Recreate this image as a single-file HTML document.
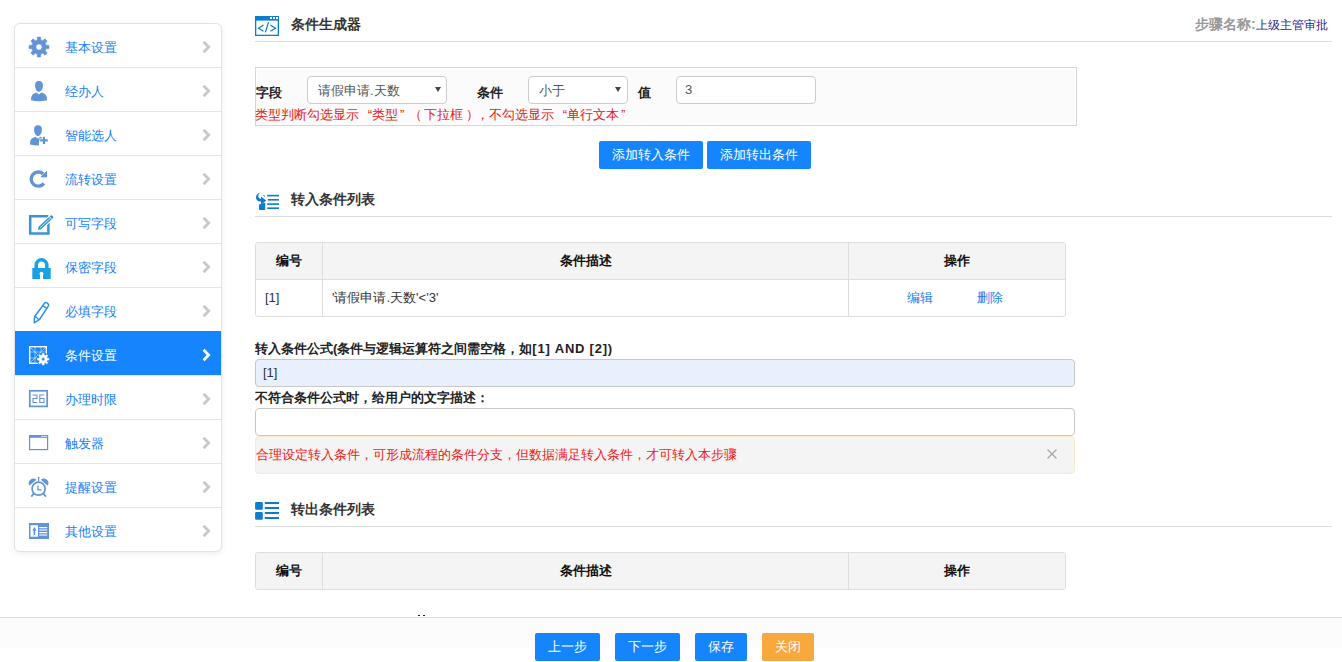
<!DOCTYPE html>
<html><head><meta charset="utf-8">
<style>
*{box-sizing:border-box;margin:0;padding:0}
html,body{width:1342px;height:662px;overflow:hidden;background:#fff;font-family:"Liberation Sans",sans-serif;color:#333}
.abs{position:absolute}
.side{position:absolute;left:14px;top:23px;width:208px;height:529px;border:1px solid #e3e3e3;border-radius:6px;background:#fff;box-shadow:0 2px 6px rgba(0,0,0,.07);overflow:hidden}
.item{position:absolute;left:0;width:206px;height:44px;border-top:1px solid #e6e6e6}
.item .t{position:absolute;left:50px;top:2px;line-height:44px;font-size:13px;color:#157ffb;white-space:nowrap}
.item .ch{position:absolute;left:188px;top:17px}
.item svg.ic{position:absolute}
.item.act{background:#1684fc;border-top-color:#1684fc}
.item.act .t{color:#fff;left:51px;top:2px}
.hdr{position:absolute;left:255px;width:1077px;border-bottom:1px solid #dcdcdc}
.htitle{position:absolute;left:291px;font-size:14px;font-weight:bold;color:#333;white-space:nowrap}
.btn{position:absolute;height:28px;line-height:28px;background:#1585fd;color:#fff;font-size:13px;text-align:center;border-radius:2px;white-space:nowrap}
.tbl{position:absolute;left:255px;width:811px;border:1px solid #dedede;border-radius:3px;overflow:hidden}
.tbl .row{position:absolute;left:0;width:809px}
.tbl .hd{background:#f4f4f4;font-weight:bold;color:#111;font-size:13px}
.cell{position:absolute;top:0;height:100%;white-space:nowrap}
.arr{position:absolute;top:10px;width:0;height:0;border-left:3.2px solid transparent;border-right:3.2px solid transparent;border-top:5.5px solid #444}
.q1,.q2,.p1,.p2{display:inline-block;width:13px;white-space:nowrap}.q1{text-align:right}.q2{text-align:left;text-indent:2px}.p1{text-indent:-2px}.p2{text-indent:3px}
.lbl{position:absolute;left:255px;font-size:13px;font-weight:bold;color:#222;white-space:nowrap}
</style></head><body>

<!-- SIDEBAR -->
<div class="side">
  <div class="item" style="top:0;border-top:none;height:43px">
    <span class="t">基本设置</span>
  </div>
  <div class="item" style="top:43px"><span class="t">经办人</span></div>
  <div class="item" style="top:87px"><span class="t">智能选人</span></div>
  <div class="item" style="top:131px"><span class="t">流转设置</span></div>
  <div class="item" style="top:175px"><span class="t">可写字段</span></div>
  <div class="item" style="top:219px"><span class="t">保密字段</span></div>
  <div class="item" style="top:263px"><span class="t">必填字段</span></div>
  <div class="item act" style="top:307px;height:45px;left:-1px;width:208px"><span class="t">条件设置</span></div>
  <div class="item" style="top:351px"><span class="t">办理时限</span></div>
  <div class="item" style="top:395px"><span class="t">触发器</span></div>
  <div class="item" style="top:439px"><span class="t">提醒设置</span></div>
  <div class="item" style="top:483px"><span class="t">其他设置</span></div>
</div>


<!-- SIDEBAR ICONS -->
<svg class="abs" style="left:0;top:0" width="60" height="662" viewBox="0 0 60 662">
 <!-- gear -->
 <path fill="#6194d6" fill-rule="evenodd" stroke="#6194d6" stroke-width="0.6" stroke-linejoin="round" d="M37.23 39.92 L37.42 37.02 L40.58 37.02 L40.77 39.92 L42.76 40.74 L44.94 38.83 L47.17 41.06 L45.26 43.24 L46.08 45.23 L48.98 45.42 L48.98 48.58 L46.08 48.77 L45.26 50.76 L47.17 52.94 L44.94 55.17 L42.76 53.26 L40.77 54.08 L40.58 56.98 L37.42 56.98 L37.23 54.08 L35.24 53.26 L33.06 55.17 L30.83 52.94 L32.74 50.76 L31.92 48.77 L29.02 48.58 L29.02 45.42 L31.92 45.23 L32.74 43.24 L30.83 41.06 L33.06 38.83 L35.24 40.74 Z M35.90 47.00 a3.10 3.10 0 1 0 6.20 0 a3.10 3.10 0 1 0 -6.20 0 Z"/>
 <!-- person -->
 <g fill="#6194d6">
  <path d="M39 81 C42.3 81 43.1 83.6 42.9 86 C42.7 89 41 91.8 39 91.8 C37 91.8 35.3 89 35.1 86 C34.9 83.6 35.7 81 39 81 Z"/>
  <path d="M31 100.3 Q30.9 95.2 33.6 93.8 L36.6 92.6 L39 94.6 L41.4 92.6 L44.4 93.8 Q47.1 95.2 47 100.3 Q39 102.2 31 100.3 Z"/>
 </g>
 <!-- person plus -->
 <g fill="#6194d6">
  <path d="M38 125.2 C41.3 125.2 42.1 127.8 41.9 130.2 C41.7 133.2 40 136 38 136 C36 136 34.3 133.2 34.1 130.2 C33.9 127.8 34.7 125.2 38 125.2 Z"/>
  <path d="M30 144.5 Q29.9 139.4 32.6 138 L35.6 136.8 L38 138.8 L40.4 136.8 L43.4 138 Q45.5 139 45.9 141 L39 141 L39 145.5 Q34 145.6 30 144.5 Z"/>
  <path d="M42.9 136.7 h2.2 v2.5 h2.7 v2.2 h-2.7 v2.6 h-2.2 v-2.6 h-2.8 v-2.2 h2.8 Z" stroke="#fff" stroke-width="1.4" paint-order="stroke"/>
 </g>
 <!-- refresh -->
 <g>
  <path d="M43.9 183.4 A7.1 7.1 0 1 1 43.2 173.9" fill="none" stroke="#6194d6" stroke-width="3.4"/>
  <path d="M47 170.4 L47 177.2 L40.4 177.2 Z" fill="#6194d6"/>
 </g>
 <!-- edit -->
 <g>
  <path d="M48.3 216.2 H30.2 V233.5 H48.4 V222.3" fill="none" stroke="#3a95cf" stroke-width="2.5"/>
  <g transform="translate(37 230.6) rotate(-43)">
   <path d="M0 0 L3.6 -2.3 H20 Q22 -2.3 22 0 Q22 2.3 20 2.3 H3.6 Z" fill="#3a95cf" stroke="#fff" stroke-width="1.1"/>
   <path d="M4.2 0 H18.6" stroke="#fff" stroke-width="0.7"/>
   <path d="M18.6 -2.3 V2.3" stroke="#fff" stroke-width="0.8"/>
  </g>
 </g>
 <!-- lock -->
 <g fill="#1aa0e4">
  <path d="M36.2 268.5 V265.4 A5.3 5.6 0 0 1 46.8 265.4 V268.5" fill="none" stroke="#1aa0e4" stroke-width="3.6"/>
  <path d="M32.3 268 H50.7 V279 H43 V275.2 A2 2 0 1 0 40 275.2 V279 H32.3 Z" fill-rule="evenodd"/>
 </g>
 <!-- pencil outline -->
 <g fill="none" stroke="#2f8de4" stroke-width="1.45" stroke-linejoin="round">
  <path d="M44.3 303.5 Q45.5 301.9 47.3 303.1 Q49.3 304.5 48.3 306.2 L39.5 319.5 L34.3 322.8 L34.5 316.8 Z"/>
  <path d="M42.8 305.6 L46.8 308.3"/>
  <path d="M34.5 316.8 Q36.5 317 37 318 Q37.5 319.3 39.5 319.5"/>
 </g>
 <!-- condition (white) -->
 <g stroke="#fff" fill="none">
  <rect x="29.7" y="346.7" width="16.6" height="16.6" stroke-width="1.4"/>
  <path d="M30 347 L46 363 M46 347 L30 363 M35 347 V363 M41 347 V363 M30 352 H46 M30 358 H46" stroke-width="0.6" opacity="0.8"/>
 </g>
 <circle cx="43.2" cy="359.2" r="6.8" fill="#1684fc"/>
 <path fill="#fff" fill-rule="evenodd" stroke="#fff" stroke-width="0.4" stroke-linejoin="round" d="M42.18 355.12 L42.28 353.37 L44.12 353.37 L44.22 355.12 L45.36 355.60 L46.67 354.43 L47.97 355.73 L46.80 357.04 L47.28 358.18 L49.03 358.28 L49.03 360.12 L47.28 360.22 L46.80 361.36 L47.97 362.67 L46.67 363.97 L45.36 362.80 L44.22 363.28 L44.12 365.03 L42.28 365.03 L42.18 363.28 L41.04 362.80 L39.73 363.97 L38.43 362.67 L39.60 361.36 L39.12 360.22 L37.37 360.12 L37.37 358.28 L39.12 358.18 L39.60 357.04 L38.43 355.73 L39.73 354.43 L41.04 355.60 Z M41.60 359.20 a1.60 1.60 0 1 0 3.20 0 a1.60 1.60 0 1 0 -3.20 0 Z"/>
 <!-- calendar 26 -->
 <g fill="none" stroke="#6194d6">
  <rect x="29.8" y="390.8" width="17.4" height="15.6" stroke-width="1.7"/>
  <path d="M32.5 395 H37 V398.5 H33 V402.5 H37.2" stroke-width="1.1"/>
  <path d="M44 395 H39.8 V402.5 H44 V398.5 H40" stroke-width="1.1"/>
 </g>
 <!-- window -->
 <g>
  <rect x="29.6" y="435.6" width="18" height="14" fill="none" stroke="#6194d6" stroke-width="1.2"/>
  <rect x="29" y="435" width="19" height="2.8" fill="#6194d6"/>
  <rect x="41.5" y="435.8" width="1.2" height="1.2" fill="#fff"/>
  <rect x="43.5" y="435.8" width="1.2" height="1.2" fill="#fff"/>
  <rect x="45.5" y="435.8" width="1.2" height="1.2" fill="#fff"/>
 </g>
 <!-- alarm -->
 <g fill="#6194d6" stroke="#6194d6">
  <circle cx="38.6" cy="488.7" r="6.5" fill="none" stroke-width="1.7"/>
  <path d="M29.6 485.6 A4.5 4.5 0 0 1 36.4 479.8 Z" stroke="none"/>
  <path d="M47.6 485.6 A4.5 4.5 0 0 0 40.8 479.8 Z" stroke="none"/>
  <path d="M38.6 477.2 V481.5" stroke-width="1.2"/><circle cx="38.6" cy="477.6" r="0.9" stroke="none"/>
  <path d="M34 493.4 L31.3 496.6 M43.2 493.4 L45.9 496.6" stroke-width="1.7"/>
  <path d="M38 485.5 V489.8 H41.5" fill="none" stroke-width="1.3"/>
 </g>
 <!-- info list -->
 <g>
  <rect x="29" y="523" width="20" height="16" fill="#6194d6"/>
  <rect x="30.5" y="525.2" width="7.5" height="11.5" fill="#fff"/>
  <path d="M34.4 527 L36.6 530.5 H35.2 V535 H33.6 V530.5 H32.2 Z" fill="#6194d6"/>
  <rect x="39.2" y="527" width="8" height="1.2" fill="#fff"/>
  <rect x="39.2" y="529.2" width="8" height="1.6" fill="#c9dbf2"/>
  <rect x="39.2" y="532" width="8" height="1.2" fill="#fff"/>
  <rect x="39.2" y="534.2" width="8" height="1.6" fill="#c9dbf2"/>
 </g>
</svg>

<!-- MAIN ICONS -->
<svg class="abs" style="left:250px;top:0" width="40" height="530" viewBox="250 0 40 530">
 <!-- code window -->
 <g>
  <rect x="255.65" y="16.65" width="22.7" height="18.7" fill="none" stroke="#0a7dcc" stroke-width="1.3"/>
  <rect x="255" y="16" width="24" height="4.6" fill="#0a7dcc"/>
  <rect x="270" y="17" width="2" height="2" fill="#fff"/>
  <rect x="273" y="17" width="2" height="2" fill="#fff"/>
  <rect x="276" y="17" width="2" height="2" fill="#fff"/>
  <path d="M263.5 25 L258.5 28.2 L263.5 31.3 M268.5 22.3 L265.4 32.4 M270.3 25 L275.5 28.2 L270.3 31.3" fill="none" stroke="#0a7dcc" stroke-width="1.2"/>
 </g>
 <!-- transfer in list -->
 <g fill="#0a7dcc">
  <rect x="267.2" y="194.8" width="11.8" height="1.6"/>
  <rect x="267.8" y="199" width="11.2" height="1.6"/>
  <rect x="267.2" y="203.3" width="11.8" height="1.6"/>
  <rect x="267.2" y="207.4" width="11.8" height="1.6"/>
  <path d="M259.8 192.6 C255 194.8 255 199.8 258.6 201.2 L261 201.6 V204.8 L266.2 200.6 L261 196.6 V198.9 L259.8 198.6 C257.8 197.9 257.9 195 259.8 192.6 Z"/>
  <path d="M262.6 194.9 L264.9 195.6 L264.6 197 Z"/>
  <path d="M259 204.6 L265.2 202.4 V209 Q265.2 209.9 264.3 209.9 H259.9 Q259 209.9 259 209 Z"/>
 </g>
 <!-- list -->
 <g fill="#0a7dcc">
  <rect x="255.1" y="501.9" width="7.7" height="7.9" rx="1.4"/>
  <rect x="255.1" y="511.9" width="7.7" height="7.9" rx="1.4"/>
  <rect x="264.8" y="502" width="14.2" height="2"/>
  <rect x="264.8" y="507" width="14.2" height="2"/>
  <rect x="264.8" y="512" width="14.2" height="2"/>
  <rect x="264.8" y="517" width="14.2" height="2"/>
 </g>
</svg>

<!-- chevrons -->
<svg class="abs" style="left:195px;top:0" width="20" height="662" viewBox="195 0 20 662">
 <g fill="none" stroke="#c8c8c8" stroke-width="2.8" stroke-linecap="butt" stroke-linejoin="miter">
  <path d="M203.6 41.8 L208.6 47.0 L203.6 52.2"/>
  <path d="M203.6 85.8 L208.6 91.0 L203.6 96.2"/>
  <path d="M203.6 129.8 L208.6 135.0 L203.6 140.2"/>
  <path d="M203.6 173.8 L208.6 179.0 L203.6 184.2"/>
  <path d="M203.6 217.8 L208.6 223.0 L203.6 228.2"/>
  <path d="M203.6 261.8 L208.6 267.0 L203.6 272.2"/>
  <path d="M203.6 305.8 L208.6 311.0 L203.6 316.2"/>
  <path d="M203.6 349.8 L208.6 355.0 L203.6 360.2" stroke="#fff"/>
  <path d="M203.6 393.8 L208.6 399.0 L203.6 404.2"/>
  <path d="M203.6 437.8 L208.6 443.0 L203.6 448.2"/>
  <path d="M203.6 481.8 L208.6 487.0 L203.6 492.2"/>
  <path d="M203.6 525.8 L208.6 531.0 L203.6 536.2"/>
 </g>
</svg>

<!-- HEADER -->
<div class="hdr" style="top:0;height:42px"></div>
<div class="htitle" style="top:14px;line-height:20px">条件生成器</div>
<div class="abs" style="left:1195px;top:14px;line-height:20px;font-size:14px;font-weight:bold;color:#999;white-space:nowrap">步骤名称:<span style="font-size:12px;font-weight:normal;color:#2b1b8f">上级主管审批</span></div>

<!-- FORM BOX -->
<div class="abs" style="left:255px;top:67px;width:822px;height:59px;background:#fbfbfb;border:1px solid #d4d4d4;box-shadow:inset 0 0 0 1px #fff"></div>
<div class="abs" style="left:256px;top:84px;font-size:13px;font-weight:bold;color:#222;line-height:18px">字段</div>
<div class="abs" style="left:307px;top:76px;width:140px;height:28px;border:1px solid #ccc;border-radius:4px;background:#fff;font-size:13px;color:#555;line-height:28px;padding-left:10px">请假申请.天数<span class="arr" style="left:127px"></span></div>
<div class="abs" style="left:477px;top:84px;font-size:13px;font-weight:bold;color:#222;line-height:18px">条件</div>
<div class="abs" style="left:528px;top:76px;width:100px;height:28px;border:1px solid #ccc;border-radius:4px;background:#fff;font-size:13px;color:#555;line-height:28px;padding-left:10px">小于<span class="arr" style="left:86px"></span></div>
<div class="abs" style="left:638px;top:84px;font-size:13px;font-weight:bold;color:#222;line-height:18px">值</div>
<div class="abs" style="left:676px;top:76px;width:140px;height:28px;border:1px solid #ccc;border-radius:4px;background:#fff;font-size:13px;color:#555;line-height:26px;padding-left:8px">3</div>
<div class="abs" style="left:255px;top:106px;font-size:13px;color:#e02020;line-height:18px;white-space:nowrap">类型判断勾选显示<span class="q1">“</span>类型<span class="q2">”</span><span class="p1">（</span>下拉框<span class="p2">）</span>，不勾选显示<span class="q1">“</span>单行文本<span class="q2">”</span></div>

<div class="btn" style="left:599px;top:141px;width:104px">添加转入条件</div>
<div class="btn" style="left:707px;top:141px;width:104px">添加转出条件</div>

<!-- SECTION 1 -->
<div class="hdr" style="top:170px;height:47px"></div>
<div class="htitle" style="top:189px;line-height:20px">转入条件列表</div>

<div class="tbl" style="top:242px;height:75px">
  <div class="row hd" style="top:0;height:37px;border-bottom:1px solid #dedede">
    <div class="cell" style="left:0;width:67px;border-right:1px solid #dedede;text-align:center;line-height:36px">编号</div>
    <div class="cell" style="left:67px;width:526px;border-right:1px solid #dedede;text-align:center;line-height:36px">条件描述</div>
    <div class="cell" style="left:593px;width:216px;text-align:center;line-height:36px">操作</div>
  </div>
  <div class="row" style="top:37px;height:36px;font-size:13px;color:#333">
    <div class="cell" style="left:0;width:67px;border-right:1px solid #dedede;line-height:36px;padding-left:9px">[1]</div>
    <div class="cell" style="left:67px;width:526px;border-right:1px solid #dedede;line-height:36px;padding-left:9px">'请假申请.天数'&lt;'3'</div>
    <div class="cell" style="left:593px;width:216px;line-height:36px;color:#1a80f0"><span class="abs" style="left:58px">编辑</span><span class="abs" style="left:128px">删除</span></div>
  </div>
</div>

<div class="lbl" style="top:340px;line-height:18px">转入条件公式(条件与逻辑运算符之间需空格，如<span style="letter-spacing:0.75px">[1] AND [2])</span></div>
<div class="abs" style="left:255px;top:359px;width:820px;height:28px;border:1px solid #c8c8c8;border-radius:4px;background:#e8f0fe;font-size:13px;color:#333;line-height:26px;padding-left:7px">[1]</div>
<div class="lbl" style="top:389px;line-height:18px">不符合条件公式时，给用户的文字描述：</div>
<div class="abs" style="left:255px;top:408px;width:820px;height:28px;border:1px solid #c8c8c8;border-radius:4px;background:#fff"></div>
<div class="abs" style="left:255px;top:436px;width:820px;height:38px;border:1px solid #faebcc;border-radius:4px;background:#f4f4f4"></div>
<div class="abs" style="left:256px;top:446px;font-size:13px;color:#f01818;line-height:18px;white-space:nowrap">合理设定转入条件，可形成流程的条件分支，但数据满足转入条件，才可转入本步骤</div>
<svg class="abs" style="left:1046px;top:448px" width="12" height="12" viewBox="0 0 12 12"><path d="M1.5 1.5 L10.5 10.5 M10.5 1.5 L1.5 10.5" stroke="#a8a8a8" stroke-width="1.4"/></svg>

<!-- SECTION 2 -->
<div class="hdr" style="top:480px;height:47px"></div>
<div class="htitle" style="top:499px;line-height:20px">转出条件列表</div>

<div class="tbl" style="top:552px;height:38px">
  <div class="row hd" style="top:0;height:36px">
    <div class="cell" style="left:0;width:67px;border-right:1px solid #dedede;text-align:center;line-height:36px">编号</div>
    <div class="cell" style="left:67px;width:526px;border-right:1px solid #dedede;text-align:center;line-height:36px">条件描述</div>
    <div class="cell" style="left:593px;width:216px;text-align:center;line-height:36px">操作</div>
  </div>
</div>

<!-- FOOTER -->
<div class="abs" style="left:418px;top:614.6px;width:2.2px;height:1.6px;background:#222"></div>
<div class="abs" style="left:423.2px;top:614.6px;width:2.2px;height:1.6px;background:#222"></div>
<div class="abs" style="left:0;top:617px;width:1342px;height:31px;background:#fcfcfc;border-top:1px solid #dadada"></div>
<div class="btn" style="left:535px;top:633px;width:65px">上一步</div>
<div class="btn" style="left:615px;top:633px;width:65px">下一步</div>
<div class="btn" style="left:695px;top:633px;width:52px">保存</div>
<div class="btn" style="left:762px;top:633px;width:52px;background:#f8a83c">关闭</div>

</body></html>
